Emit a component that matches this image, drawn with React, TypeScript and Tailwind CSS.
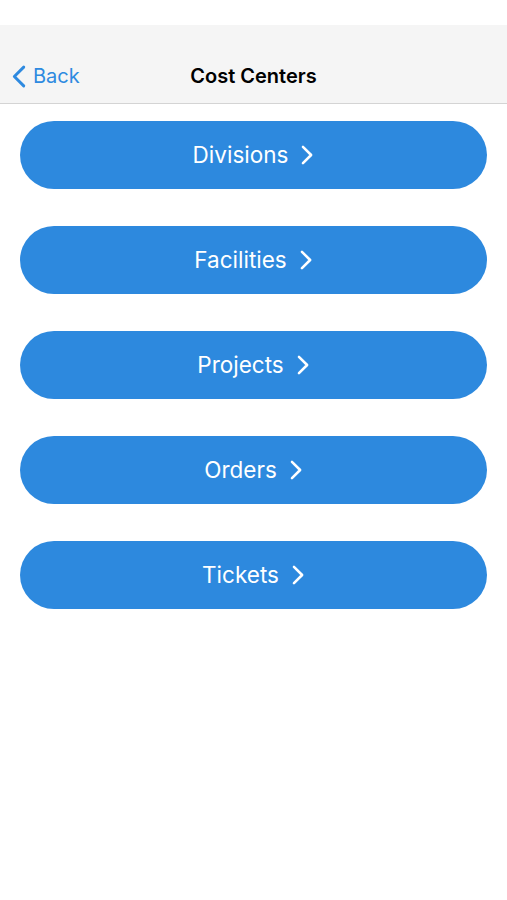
const items = ['Divisions', 'Facilities', 'Projects', 'Orders', 'Tickets'];

function Chevron({ dir, className }: { dir: 'left' | 'right'; className?: string }) {
  return (
    <svg viewBox="0 0 14 22" className={className} fill="none" stroke="currentColor" strokeWidth={2.8} strokeLinecap="round" strokeLinejoin="round">
      {dir === 'left' ? <polyline points="12,2 3,11 12,20" /> : <polyline points="2,2 11,11 2,20" />}
    </svg>
  );
}

export default function App() {
  return (
    <div className="min-h-[900px] w-full bg-white" style={{ fontFamily: 'Inter, "Noto Sans", sans-serif' }}>
      {/* status bar area */}
      <div className="h-[25px] bg-white" />

      {/* nav bar */}
      <div className="relative flex h-[79px] items-center border-b border-[#d4d4d4] bg-[#f5f5f5] pt-[24px]">
        <button className="flex items-center gap-[7px] pl-[11px] text-[#2e8ae0]">
          <Chevron dir="left" className="h-[23px] w-[15px]" />
          <span className="text-[20px] leading-none">Back</span>
        </button>
        <div className="pointer-events-none absolute inset-x-0 bottom-0 top-[24px] flex items-center justify-center">
          <span className="text-[20px] font-semibold leading-none text-black">Cost Centers</span>
        </div>
      </div>

      {/* list of buttons */}
      <div className="flex flex-col gap-[37px] px-[20px] pt-[17px]">
        {items.map((label) => (
          <button
            key={label}
            className="flex h-[68px] w-full items-center justify-center gap-[13px] rounded-full bg-[#2d89de] text-white"
          >
            <span className="text-[22.5px] leading-none">{label}</span>
            <Chevron dir="right" className="h-[20px] w-[13px]" />
          </button>
        ))}
      </div>
    </div>
  );
}
